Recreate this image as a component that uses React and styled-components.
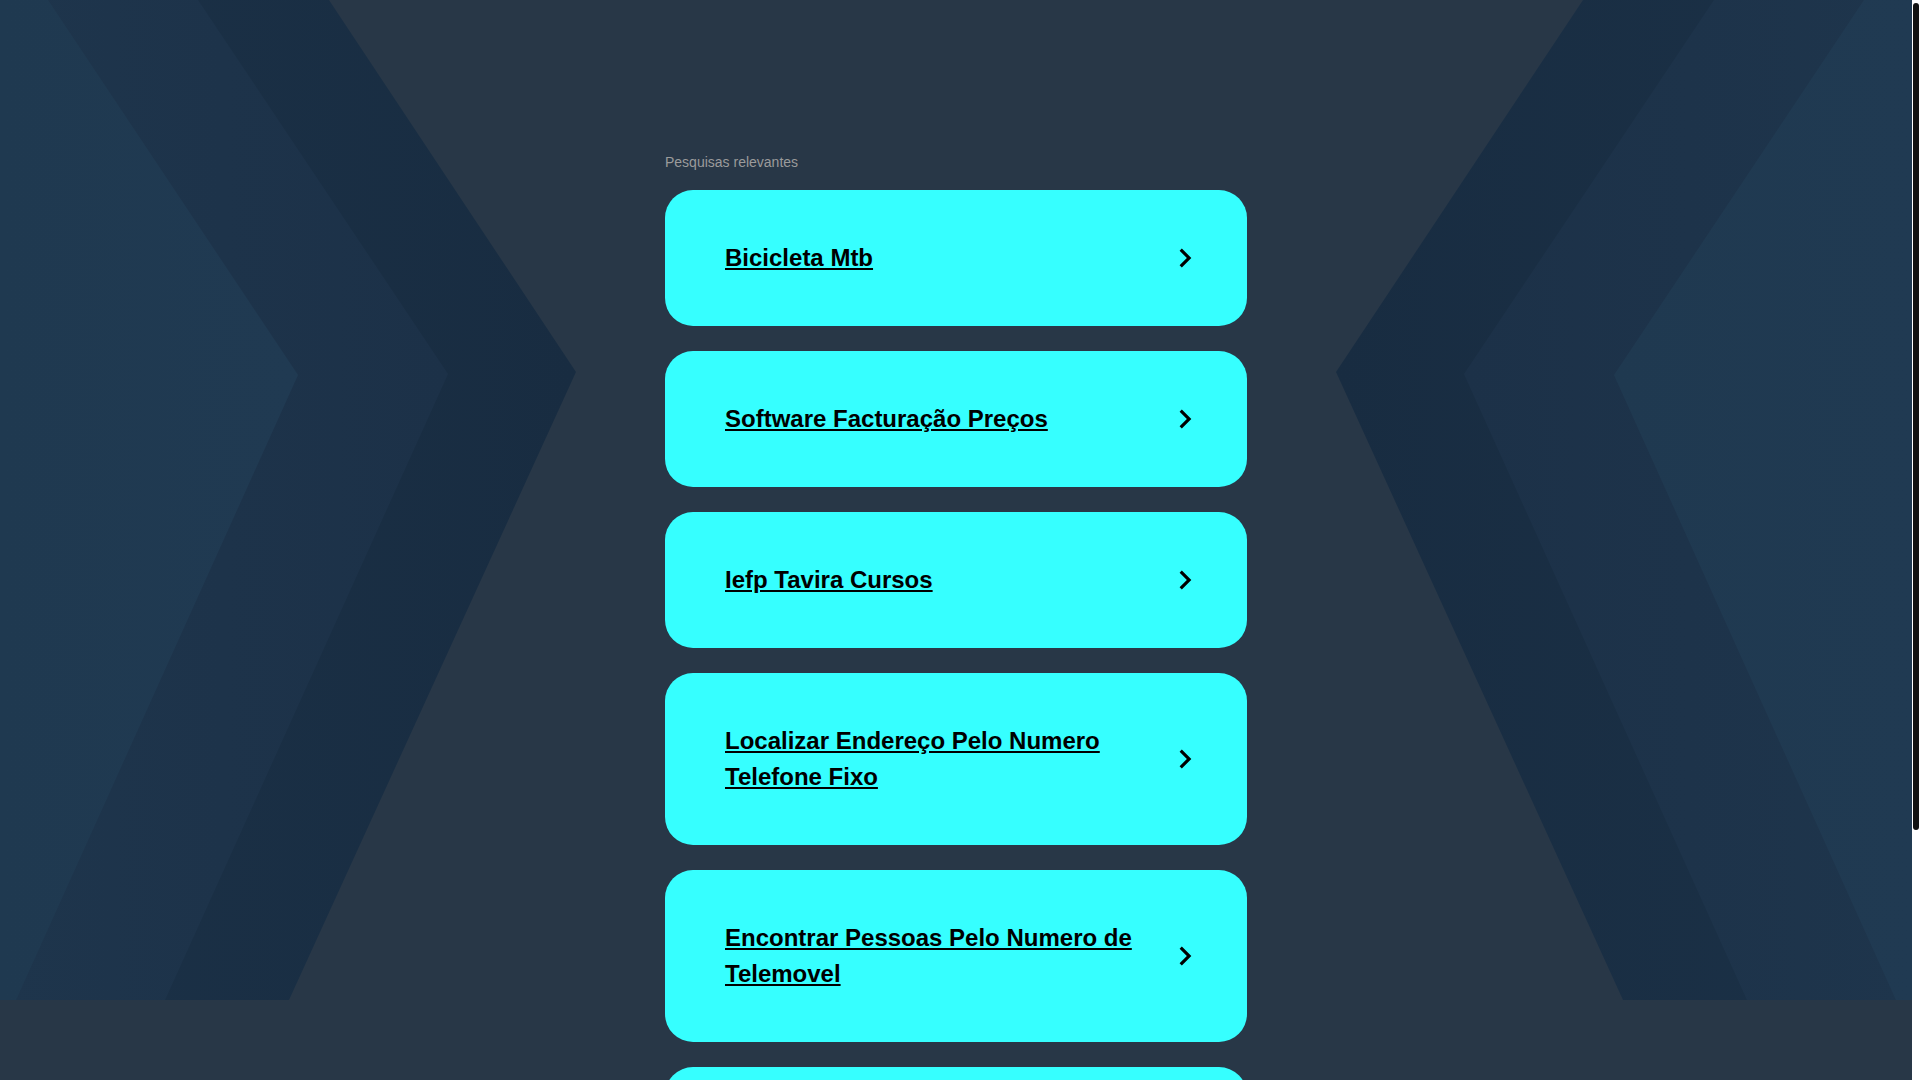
import React from "react";
import styled, { createGlobalStyle } from "styled-components";

const searches = [
  "Bicicleta Mtb",
  "Software Facturação Preços",
  "Iefp Tavira Cursos",
  "Localizar Endereço Pelo Numero Telefone Fixo",
  "Encontrar Pessoas Pelo Numero de Telemovel",
  "Cursos Online Gratuitos",
];

const GlobalStyle = createGlobalStyle`
  html,
  body {
    margin: 0;
    padding: 0;
    height: 100%;
    overflow: hidden;
    background: #283747;
    font-family: "Liberation Sans", Arial, Helvetica, sans-serif;
  }
`;

const Backdrop = () => (
  <BackdropSvg viewBox="0 0 1912 1000" preserveAspectRatio="none" aria-hidden="true">
    <defs>
      <linearGradient id="bandDark" x1="0" y1="0" x2="1" y2="0">
        <stop offset="0" stopColor="#1b3147" />
        <stop offset="1" stopColor="#182c41" />
      </linearGradient>
      <linearGradient id="bandMid" x1="0" y1="0" x2="1" y2="0">
        <stop offset="0" stopColor="#1e354c" />
        <stop offset="1" stopColor="#1c3148" />
      </linearGradient>
      <linearGradient id="bandLight" x1="0" y1="0" x2="1" y2="0">
        <stop offset="0" stopColor="#1f3950" />
        <stop offset="1" stopColor="#203a52" />
      </linearGradient>
      <linearGradient id="bandDarkR" x1="1" y1="0" x2="0" y2="0">
        <stop offset="0" stopColor="#1b3147" />
        <stop offset="1" stopColor="#182c41" />
      </linearGradient>
      <linearGradient id="bandMidR" x1="1" y1="0" x2="0" y2="0">
        <stop offset="0" stopColor="#1e354c" />
        <stop offset="1" stopColor="#1c3148" />
      </linearGradient>
    </defs>
    {/* left arrow */}
    <polygon points="0,0 329,0 576,372 289,1000 0,1000" fill="url(#bandDark)" />
    <polygon points="0,0 198,0 448,374 165,1000 0,1000" fill="url(#bandMid)" />
    <polygon points="0,0 48,0 298,375 16,1000 0,1000" fill="url(#bandLight)" />
    {/* right arrow */}
    <polygon points="1912,0 1583,0 1336,372 1623,1000 1912,1000" fill="url(#bandDarkR)" />
    <polygon points="1912,0 1714,0 1464,374 1747,1000 1912,1000" fill="url(#bandMidR)" />
    <polygon points="1912,0 1864,0 1614,375 1896,1000 1912,1000" fill="url(#bandLight)" />
  </BackdropSvg>
);

const ChevronIcon = () => (
  <Chevron viewBox="0 0 24 24" aria-hidden="true">
    <path d="M10 6 8.59 7.41 13.17 12l-4.58 4.59L10 18l6-6z" />
  </Chevron>
);

const App = () => {
  return (
    <>
      <GlobalStyle />
      <Frame>
        <Viewport>
          <Page>
            <Backdrop />
            <Main>
              <Label>Pesquisas relevantes</Label>
              <List>
                {searches.map((term, index) => (
                  <Card key={`search${index}`} href="#">
                    <Term>{term}</Term>
                    <ChevronIcon />
                  </Card>
                ))}
              </List>
            </Main>
          </Page>
        </Viewport>
        <ScrollTrack aria-hidden="true">
          <ScrollThumb />
        </ScrollTrack>
      </Frame>
    </>
  );
};

const Frame = styled.div`
  display: flex;
  height: 100vh;
`;

const Viewport = styled.div`
  flex: 1;
  min-width: 0;
  overflow: hidden;
`;

const ScrollTrack = styled.div`
  flex: none;
  width: 8px;
  background: #ffffff;
  display: flex;
  flex-direction: column;
  align-items: center;
  padding-top: 3px;
  box-sizing: border-box;
`;

const ScrollThumb = styled.div`
  width: 6px;
  height: 827px;
  background: #111111;
  border-radius: 3px;
`;

const Page = styled.div`
  position: relative;
  min-height: 100%;
`;

const BackdropSvg = styled.svg`
  position: absolute;
  top: 0;
  left: 0;
  width: 100%;
  height: 1000px;
  display: block;
  z-index: 0;
`;

const Main = styled.main`
  position: relative;
  z-index: 1;
  width: 582px;
  margin: 0 auto;
  padding: 154px 0 208px;
`;

const Label = styled.div`
  font-size: 14px;
  line-height: 16px;
  color: #9b9b9b;
  margin-bottom: 20px;
`;

const List = styled.div`
  display: flex;
  flex-direction: column;
  gap: 25px;
`;

const Card = styled.a`
  display: flex;
  align-items: center;
  justify-content: space-between;
  gap: 20px;
  padding: 50px 43px 50px 60px;
  background: #36ffff;
  border-radius: 28px;
  color: #000000;
  text-decoration: none;
`;

const Term = styled.span`
  flex: 1;
  font-size: 24px;
  line-height: 36px;
  font-weight: 700;
  color: #000000;
  text-decoration: underline;
`;

const Chevron = styled.svg`
  flex: none;
  width: 38px;
  height: 38px;
  margin: -1px 0;
  fill: #000000;
`;

export default App;
